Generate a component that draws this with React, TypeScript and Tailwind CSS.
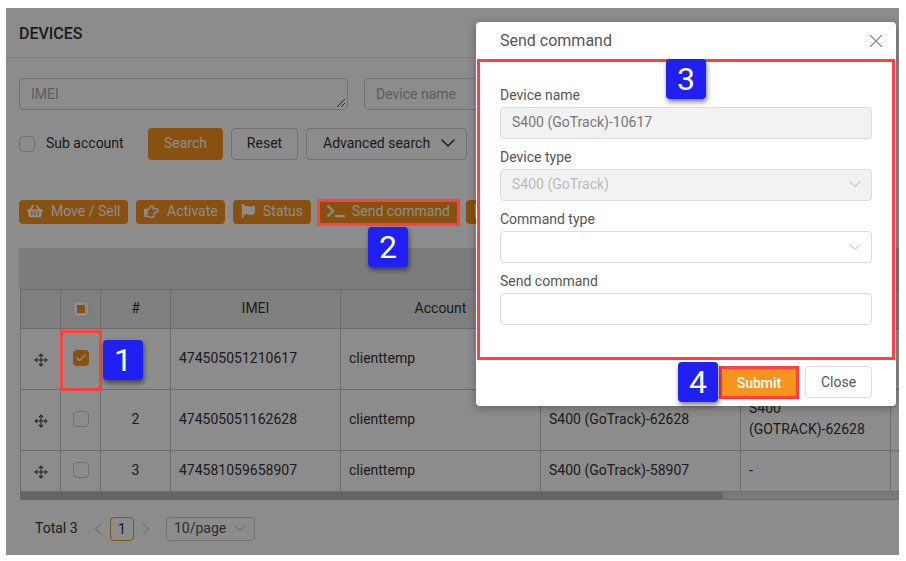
import React from 'react';
import { FaShoppingBasket, FaRegHandPointRight, FaFlag, FaTerminal } from 'react-icons/fa';
import { ChevronDown, ChevronLeft, ChevronRight, Check, X, Move } from 'lucide-react';

const rows = [
  { no: '', imei: '474505051210617', account: 'clienttemp', name: '', alias: '', checked: true, height: 'h-[61px]' },
  { no: '2', imei: '474505051162628', account: 'clienttemp', name: 'S400 (GoTrack)-62628', alias: 'S400 (GOTRACK)-62628', checked: false, height: 'h-[61px]' },
  { no: '3', imei: '474581059658907', account: 'clienttemp', name: 'S400 (GoTrack)-58907', alias: '-', checked: false, height: 'h-[41px]' },
];

function ActionButton({ icon, label, className, gap = 'gap-2' }: { icon: React.ReactNode; label?: string; className: string; gap?: string }) {
  return (
    <button className={`flex h-6 items-center rounded-sm bg-[#f7941d] pb-0.5 pl-2 text-sm text-white ${gap} ${className}`}>
      {icon}
      {label}
    </button>
  );
}

function Badge({ n, className }: { n: string; className: string }) {
  return (
    <div className={`absolute z-30 flex h-10 w-10 items-center justify-center rounded-sm bg-[#2020f5] text-[32px] text-white shadow-[1px_3px_5px_rgba(0,0,0,0.5)] ${className}`}>
      {n}
    </div>
  );
}

function Field({ label, children }: { label: string; children: React.ReactNode }) {
  return (
    <div className="h-[62px]">
      <div className="h-[18px] text-sm leading-[18px] text-[#555]">{label}</div>
      {children}
    </div>
  );
}

export default function App() {
  return (
    <div className="h-[561px] w-[906px] overflow-hidden bg-white pl-1.5 pt-2 font-['Roboto',sans-serif]">
      <div className="relative h-[547px] w-[893px] overflow-hidden bg-white text-[#333]">
        {/* page behind the dialog */}
        <div className="flex h-[50px] items-center border-b border-[#e8e8e8] pl-[13px] pt-0.5 text-base font-medium">DEVICES</div>

        <div className="mt-5 flex gap-4 pl-[13px]">
          <div className="relative flex h-8 w-[329px] items-center rounded-sm border border-[#d0d0d0] pl-[11px] text-sm text-[#aaa]">
            IMEI
            <svg className="absolute bottom-0.5 right-0.5 h-2 w-2" viewBox="0 0 8 8" stroke="#555" strokeWidth="1">
              <path d="M0 8 8 0M4 8l4-4" />
            </svg>
          </div>
          <div className="flex h-8 w-[300px] items-center rounded-sm border border-[#d0d0d0] pl-[11px] text-sm text-[#aaa]">Device name</div>
        </div>

        <div className="mt-[18px] flex h-8 items-center pl-[13px] text-sm">
          <span className="h-4 w-4 rounded-sm border border-[#ccc]" />
          <span className="ml-[11px] w-[102px] pb-0.5">Sub account</span>
          <button className="h-8 w-[75px] rounded-sm bg-[#f7941d] pb-0.5 text-white">Search</button>
          <button className="ml-2 h-8 w-[67px] rounded-sm border border-[#ccc] pb-0.5">Reset</button>
          <button className="ml-2 flex h-8 w-[161px] items-center gap-1.5 rounded-sm border border-[#ccc] pb-0.5 pl-4">
            Advanced search <ChevronDown size={24} strokeWidth={1.5} />
          </button>
        </div>

        <div className="mt-10 flex gap-2 pl-[13px]">
          <ActionButton className="w-[109px]" icon={<FaShoppingBasket size={16} />} label="Move / Sell" />
          <ActionButton className="w-[89px]" icon={<FaRegHandPointRight size={15} />} label="Activate" />
          <ActionButton className="w-[78px]" icon={<FaFlag size={14} />} label="Status" />
          <ActionButton className="w-[139px]" gap="gap-[7px]" icon={<FaTerminal size={18} />} label="Send command" />
          <ActionButton className="w-[80px]" icon={<FaFlag size={14} />} />
        </div>

        <div className="mt-6 ml-[13px] h-[41px] bg-[#e2e2e2]" />

        <table className="ml-[14px] w-[1000px] table-fixed border-collapse text-sm">
          <colgroup>
            <col className="w-10" />
            <col className="w-10" />
            <col className="w-[70px]" />
            <col className="w-[170px]" />
            <col className="w-[200px]" />
            <col className="w-[200px]" />
            <col className="w-[150px]" />
            <col />
          </colgroup>
          <thead>
            <tr className="h-[39px] bg-[#e8e8e8]">
              <th className="border border-[#c6c6c6]" />
              <th className="border border-[#c6c6c6]">
                <span className="mx-auto flex h-4 w-4 items-center justify-center rounded-sm border border-[#ddd] bg-white">
                  <span className="h-2 w-2 bg-[#f7941d]" />
                </span>
              </th>
              <th className="border border-[#c6c6c6] pb-0.5 font-normal">#</th>
              <th className="border border-[#c6c6c6] pb-0.5 font-normal">IMEI</th>
              <th className="border border-[#c6c6c6] pb-0.5 font-normal">Account</th>
              <th className="border border-[#c6c6c6]" />
              <th className="border border-[#c6c6c6]" />
              <th className="border border-[#c6c6c6]" />
            </tr>
          </thead>
          <tbody>
            {rows.map((r) => (
              <tr key={r.imei} className={r.height}>
                <td className="border border-[#c6c6c6] pt-0.5 text-center">
                  <Move size={14} strokeWidth={1.75} className="mx-auto" />
                </td>
                <td className="border border-[#c6c6c6] pb-0.5">
                  {r.checked ? (
                    <span className="mx-auto flex h-4 w-4 items-center justify-center rounded-sm bg-[#f7941d] text-white">
                      <Check size={12} strokeWidth={3} />
                    </span>
                  ) : (
                    <span className="mx-auto block h-4 w-4 rounded-sm border border-[#ccc]" />
                  )}
                </td>
                <td className="border border-[#c6c6c6] pb-0.5 text-center">{r.no}</td>
                <td className="border border-[#c6c6c6] px-2 pb-0.5">{r.imei}</td>
                <td className="border border-[#c6c6c6] px-2 pb-0.5">{r.account}</td>
                <td className="border border-[#c6c6c6] px-2 pb-0.5">{r.name}</td>
                <td className="border border-[#c6c6c6] px-2 pb-0.5 leading-[21px]">{r.alias}</td>
                <td className="border border-[#c6c6c6]" />
              </tr>
            ))}
          </tbody>
        </table>

        <div className="ml-[14px] h-2 border-b border-[#c6c6c6] bg-[#dcdcdc]">
          <div className="h-2 w-[703px] bg-[#b8b8b8]" />
        </div>

        <div className="mt-[17px] flex h-6 items-center pl-[29px] text-sm">
          <span className="w-[55px] pb-0.5">Total 3</span>
          <ChevronLeft size={20} strokeWidth={1} className="-ml-0.5 text-[#aaa]" />
          <span className="ml-0.5 flex h-6 w-6 items-center justify-center rounded-sm border border-[#f7941d]">1</span>
          <ChevronRight size={20} strokeWidth={1} className="ml-0.5 text-[#aaa]" />
          <span className="ml-2.5 flex h-6 w-[89px] items-center gap-1 rounded-sm border border-[#ccc] pb-0.5 pl-[7px] text-[#555]">
            10/page <ChevronDown size={20} strokeWidth={1} className="text-[#aaa]" />
          </span>
        </div>

        {/* mask */}
        <div className="absolute inset-0 z-10 bg-black/45" />

        {/* highlights on the page */}
        <div className="absolute left-[311px] top-[191px] z-20 h-[27px] w-[143px] border-[3px] border-[#ff4040]" />
        <div className="absolute left-[54px] top-[322px] z-20 h-[61px] w-[42px] border-[3px] border-[#ff4040]" />

        {/* dialog */}
        <div className="absolute left-[470px] top-[14px] z-20 h-[384px] w-[420px] rounded-sm bg-white shadow-[0_2px_10px_rgba(0,0,0,0.3)]">
          <div className="flex h-[37px] items-center justify-between pl-6 pr-[9px] text-base text-[#555]">
            Send command
            <X size={22} strokeWidth={1.25} className="text-[#888]" />
          </div>
          <div className="mx-px h-[301px] border-[3px] border-[#ff4040] px-5 pt-6">
            <Field label="Device name">
              <div className="mt-[3px] flex h-8 items-center rounded-sm border border-[#ddd] bg-[#f2f2f2] pb-0.5 pl-[11px] text-sm text-[#777]">S400 (GoTrack)-10617</div>
            </Field>
            <Field label="Device type">
              <div className="mt-[3px] flex h-8 items-center justify-between rounded-sm border border-[#ddd] bg-[#f2f2f2] pb-0.5 pl-[11px] pr-1.5 text-sm text-[#bbb]">
                S400 (GoTrack)
                <ChevronDown size={20} strokeWidth={1} className="text-[#aaa]" />
              </div>
            </Field>
            <Field label="Command type">
              <div className="mt-[3px] flex h-8 items-center justify-end rounded-sm border border-[#ddd] pr-1.5">
                <ChevronDown size={20} strokeWidth={1} className="text-[#aaa]" />
              </div>
            </Field>
            <Field label="Send command">
              <div className="mt-[3px] h-8 rounded-sm border border-[#ddd]" />
            </Field>
          </div>
          <div className="mt-1.5 flex justify-end gap-1.5 pr-6">
            <button className="h-[33px] w-20 border-[3px] border-[#ff4040] bg-[#f7941d] text-sm font-medium text-white">Submit</button>
            <button className="h-8 w-[67px] rounded-sm border border-[#ddd] text-sm text-[#555]">Close</button>
          </div>
        </div>

        <Badge n="1" className="left-[97px] top-[332px]" />
        <Badge n="2" className="left-[362px] top-[219px]" />
        <Badge n="3" className="left-[660px] top-[51px]" />
        <Badge n="4" className="left-[672px] top-[354px]" />
      </div>
    </div>
  );
}
